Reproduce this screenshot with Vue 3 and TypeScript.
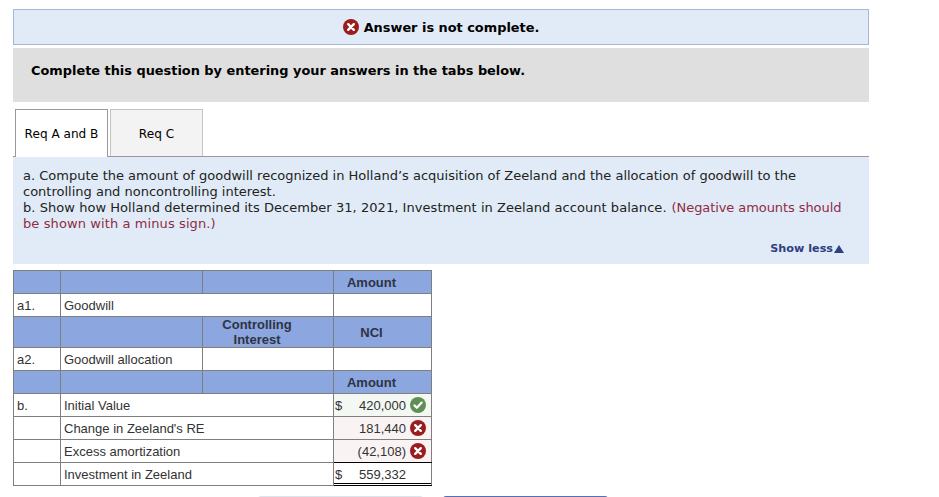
<script setup lang="ts">
const amounts = [
  { label: 'b.', name: 'Initial Value', dollar: true, value: '420,000', mark: 'ok', cls: 'good' },
  { label: '', name: "Change in Zeeland's RE", dollar: false, value: '181,440', mark: 'bad', cls: 'wrong' },
  { label: '', name: 'Excess amortization', dollar: false, value: '(42,108)', mark: 'bad', cls: 'wrong' },
]
</script>

<template>
  <div class="page">
    <div class="banner">
      <svg class="mark" viewBox="0 0 16 16" width="16" height="16">
        <circle cx="8" cy="8" r="8" fill="#9b1c1c" />
        <path d="M5.2 5.2l5.6 5.6M10.8 5.2l-5.6 5.6" stroke="#fff" stroke-width="2.4" stroke-linecap="round" />
      </svg>
      <span>Answer is not complete.</span>
    </div>
    <div class="complete">Complete this question by entering your answers in the tabs below.</div>
    <div class="tabs">
      <div class="tab active">Req A and B</div>
      <div class="tab">Req C</div>
    </div>
    <div class="panel">
      <p>a. Compute the amount of goodwill recognized in Holland’s acquisition of Zeeland and the allocation of goodwill to the controlling and noncontrolling interest.</p>
      <div class="line"><span class="wide">b. Show how Holland determined its December 31, 2021, Investment in Zeeland account balance.</span><span class="note tight">(Negative amounts should</span></div>
      <div class="line"><span class="note loose">be shown with a minus sign.)</span></div>
      <div class="less">Show less<span class="tri"></span></div>
    </div>
    <table class="sheet">
      <colgroup>
        <col class="c1" /><col class="c2" /><col class="c3" /><col class="c4" />
      </colgroup>
      <tbody>
        <tr class="head h23"><td></td><td></td><td></td><td>Amount</td></tr>
        <tr class="h23"><td>a1.</td><td colspan="2">Goodwill</td><td></td></tr>
        <tr class="head h31 flat"><td></td><td></td><td>Controlling<br />Interest</td><td>NCI</td></tr>
        <tr class="h23"><td>a2.</td><td>Goodwill allocation</td><td></td><td></td></tr>
        <tr class="head h23"><td></td><td></td><td></td><td>Amount</td></tr>
        <tr v-for="r in amounts" :key="r.name" class="h23">
          <td>{{ r.label }}</td>
          <td colspan="2">{{ r.name }}</td>
          <td class="amount" :class="r.cls">
            <div class="cell">
              <span class="dollar">{{ r.dollar ? '$' : '' }}</span>
              <span class="val">{{ r.value }}</span>
              <svg class="mark" viewBox="0 0 16 16" width="16" height="16">
                <template v-if="r.mark === 'ok'">
                  <circle cx="8" cy="8" r="8" fill="#5f8f54" />
                  <path d="M4.4 8.4l2.5 2.4 4.8-5.2" fill="none" stroke="#fff" stroke-width="2.2" stroke-linecap="round" stroke-linejoin="round" />
                </template>
                <template v-else>
                  <circle cx="8" cy="8" r="8" fill="#9b1c1c" />
                  <path d="M5.2 5.2l5.6 5.6M10.8 5.2l-5.6 5.6" stroke="#fff" stroke-width="2.4" stroke-linecap="round" />
                </template>
              </svg>
            </div>
          </td>
        </tr>
        <tr class="h23">
          <td></td>
          <td colspan="2">Investment in Zeeland</td>
          <td class="amount total">
            <div class="cell">
              <span class="dollar">$</span>
              <span class="val">559,332</span>
            </div>
          </td>
        </tr>
      </tbody>
    </table>
    <div class="buttons">
      <div class="btn prev"></div>
      <div class="btn next"></div>
    </div>
  </div>
</template>

<style>
html, body { margin: 0; background: #fff; overflow: hidden; height: 497px; }
</style>

<style scoped>
.page {
  width: 939px;
  height: 497px;
  overflow: hidden;
  box-sizing: border-box;
  padding: 9px 0 0 13px;
  font-family: "DejaVu Sans", Verdana, sans-serif;
  color: #000;
}
.banner {
  width: 856px;
  height: 36px;
  box-sizing: border-box;
  border: 1px solid #a3b8dc;
  background: #e0ebf7;
  display: flex;
  align-items: center;
  justify-content: center;
  gap: 5px;
  font-size: 12.9px;
  font-weight: 700;
}
.mark { flex: none; }
.complete {
  width: 856px;
  height: 54px;
  margin-top: 3px;
  box-sizing: border-box;
  background: #dfdfdf;
  padding: 14px 18px 0;
  font-size: 12.9px;
  line-height: 17px;
  font-weight: 700;
}
.tabs {
  width: 856px;
  height: 48px;
  box-sizing: border-box;
  margin-top: 7px;
  padding-left: 2px;
  border-bottom: 1px solid #999;
  display: flex;
  gap: 2px;
}
.tab {
  width: 93px;
  height: 47px;
  box-sizing: border-box;
  border: 1px solid #c4c4c4;
  border-bottom: 0;
  background: #f3f3f3;
  font-size: 12.1px;
  padding-top: 1px;
  display: flex;
  align-items: center;
  justify-content: center;
}
.tab.active {
  height: 48px;
  padding-top: 0;
  background: #fff;
  border-color: #999;
  position: relative;
  z-index: 1;
}
.panel {
  width: 856px;
  height: 107px;
  box-sizing: border-box;
  background: #e0ebf7;
  padding: 11px 25px 0 10px;
  font-size: 13px;
  line-height: 16px;
  color: #222;
}
.panel p { margin: 0; }
.line { white-space: nowrap; }
.wide { letter-spacing: 0.05px; margin-right: 5px; }
.note { color: #8f2b45; }
.tight { letter-spacing: -0.08px; }
.loose { letter-spacing: 0.1px; }
.less {
  margin: 10px -15px 0 0;
  padding-right: 15px;
  display: flex;
  justify-content: flex-end;
  align-items: center;
  gap: 1px;
  font-size: 11.2px;
  font-weight: 700;
  line-height: 14px;
  color: #2f3f7f;
}
.tri {
  width: 0;
  height: 0;
  border-left: 5px solid transparent;
  border-right: 5px solid transparent;
  border-bottom: 8px solid #2f3f7f;
}
.sheet {
  margin-top: 6px;
  width: 418px;
  table-layout: fixed;
  border-collapse: collapse;
  font-family: "Liberation Sans", Arial, sans-serif;
  font-size: 13px;
  line-height: 15px;
  color: #333;
}
.c1 { width: 47px; }
.c2 { width: 142px; }
.c3 { width: 131px; }
.c4 { width: 98px; }
.sheet td {
  border: 1px solid #7f7f7f;
  padding: 0 3px;
  white-space: nowrap;
  overflow: hidden;
}
.h23 { height: 23px; }
.h31 { height: 31px; }
.head td {
  background: #8ca6e0;
  text-align: center;
  font-weight: 700;
  color: #2e3442;
  padding: 1px 22px 0 0;
}
.flat td { padding-top: 0; }
.sheet .amount { padding: 0 3px 0 1px; }
.cell { display: flex; align-items: center; height: 22px; }
.dollar { width: 14px; flex: none; }
.val { width: 57px; flex: none; text-align: right; }
.cell .mark { margin-left: 4px; }
.good { background: #f4f8f3; }
.wrong { background: #f9f3f3; }
.sheet tr:nth-last-child(2) .amount { border-bottom-color: #000; }
.sheet .total {
  border-bottom-color: #000;
  box-shadow: inset 0 -1px 0 #fff, inset 0 -2px 0 #000;
}
.buttons {
  margin: 10px 0 0 245px;
  display: flex;
  gap: 20px;
}
.btn {
  width: 165px;
  height: 30px;
  border-radius: 3px;
}
.prev { background: #dde5ec; }
.next { background: #5570b8; }
</style>
